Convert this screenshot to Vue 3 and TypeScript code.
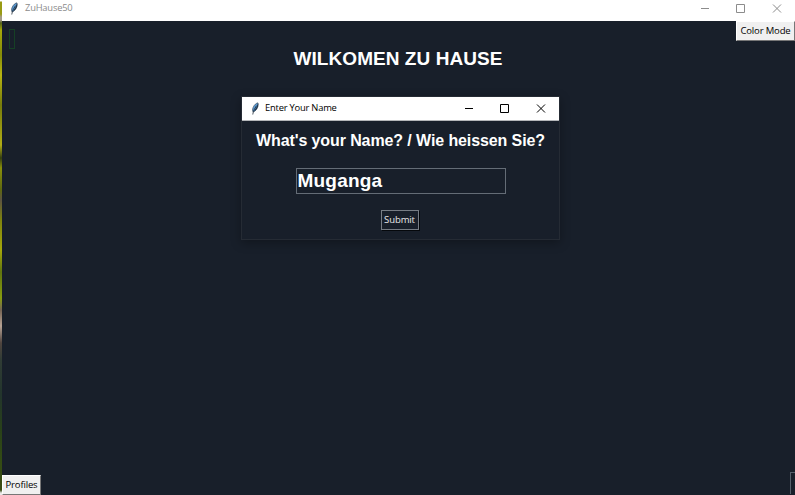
<script setup lang="ts">
import { ref } from 'vue'

const appTitle = 'ZuHause50'
const dialogTitle = 'Enter Your Name'
const name = ref('Muganga')
const windows = ['minimise', 'maximise', 'close'] as const
</script>

<template>
  <div class="desktop">
    <div class="wallpaper"></div>
    <main class="window">
      <header class="titlebar inactive">
        <svg class="feather" viewBox="0 0 10 14">
          <path d="M2.6 10.2C1.6 7 4.2 2 8 .9 9.4 4 7 8.8 3.6 10.6z" fill="#5a9bd5" stroke="#33414f" stroke-width=".7" />
          <path d="M8.4 1.4C9 4.8 6.6 9 3.6 10.4L6.6 5.6z" fill="#1c2a3a" />
          <path d="M2.6 13.5 3.4 9.5 6.6 4" stroke="#182431" stroke-width=".8" fill="none" />
        </svg>
        <span class="caption main-caption">{{ appTitle }}</span>
        <span class="controls">
          <svg v-for="w in windows" :key="w" viewBox="0 0 9 9" :class="w">
            <path v-if="w === 'minimise'" d="M1 4.5H9" />
            <path v-else-if="w === 'maximise'" d="M.5.5H8.5V8.5H.5Z" />
            <path v-else d="M1 .5 9 8.5M9 .5 1 8.5" />
          </svg>
        </span>
      </header>
      <section class="content">
        <div class="top-row">
          <div class="green-frame"></div>
          <button class="tk-button color-mode"><span>Color Mode</span></button>
        </div>
        <h1><span>WILKOMEN ZU HAUSE</span></h1>
        <div class="bottom-row">
          <button class="tk-button profiles"><span>Profiles</span></button>
          <div class="edge-frame"></div>
        </div>
      </section>
    </main>

    <section class="dialog">
      <header class="titlebar">
        <svg class="feather" viewBox="0 0 10 14">
          <path d="M2.6 10.2C1.6 7 4.2 2 8 .9 9.4 4 7 8.8 3.6 10.6z" fill="#5a9bd5" stroke="#33414f" stroke-width=".7" />
          <path d="M8.4 1.4C9 4.8 6.6 9 3.6 10.4L6.6 5.6z" fill="#1c2a3a" />
          <path d="M2.6 13.5 3.4 9.5 6.6 4" stroke="#182431" stroke-width=".8" fill="none" />
        </svg>
        <span class="caption dialog-caption">{{ dialogTitle }}</span>
        <span class="controls">
          <svg v-for="w in windows" :key="w" viewBox="0 0 9 9" :class="w">
            <path v-if="w === 'minimise'" d="M1 4.5H9" />
            <path v-else-if="w === 'maximise'" d="M.5.5H8.5V8.5H.5Z" />
            <path v-else d="M1 .5 9 8.5M9 .5 1 8.5" />
          </svg>
        </span>
      </header>
      <form class="form" @submit.prevent>
        <label for="name">What's your Name? / Wie heissen Sie?</label>
        <input id="name" v-model="name" type="text" spellcheck="false" autocomplete="off" />
        <button class="submit"><span>Submit</span></button>
      </form>
    </section>
  </div>
</template>

<style>
body {
  margin: 0;
  overflow: hidden;
}
</style>

<style scoped>
* {
  box-sizing: border-box;
}
.desktop {
  position: relative;
  display: flex;
  width: 795px;
  height: 495px;
  background: #181f2a;
  font-family: 'Open Sans', 'Noto Sans', sans-serif;
}
.wallpaper {
  width: 2px;
  background: linear-gradient(#fff 0 1px, #999b13 2px 14px, #a59b87 17px 20px, #526018 23px, #a7a909 30px, #858c08 55px, #b8b512 75px, #777c0b 105px, #b0ac16 145px, #343e10 158px, #898f0b 168px, #5e6710 190px, #5d5440 200px, #7e830e 220px, #a5a70b 250px, #61750f 272px, #879c0f 298px, #766554 310px, #b6a294 326px, #4f443e 343px, #303c35 360px, #23352c 395px, #294119 430px, #334b14 460px, #3b4c13 490px, #e8e8e8 493px);
}
.window {
  flex: 1;
  display: flex;
  flex-direction: column;
  min-width: 0;
}
.titlebar {
  display: flex;
  align-items: center;
  height: 24px;
  flex: none;
  padding: 0 14px 1px 8px;
  border-bottom: 1px solid #b4b6b9;
  background: #fff;
  color: #000;
}
.titlebar.inactive {
  height: 21px;
  padding: 0 14px 5px 7px;
  border-bottom: 0;
  color: #8c8c8c;
}
.feather {
  width: 10px;
  height: 13px;
}
.caption {
  font-size: 9.4px;
  line-height: 14px;
  letter-spacing: -0.22px;
  white-space: nowrap;
}
.main-caption {
  margin-left: 6px;
}
.dialog-caption {
  margin-left: 5px;
}
.controls {
  display: flex;
  gap: 27px;
  margin-left: auto;
}
.controls svg {
  width: 9px;
  height: 9px;
  overflow: visible;
  fill: none;
  stroke: currentColor;
  stroke-width: 1;
}
.content {
  flex: 1;
  display: flex;
  flex-direction: column;
  background: #181f2a;
}
.top-row {
  display: flex;
  justify-content: space-between;
  height: 28px;
}
.green-frame {
  width: 6px;
  height: 20px;
  margin: 8px 0 0 7px;
  border: 1px solid #164025;
}
.tk-button {
  height: 20px;
  padding: 0;
  border: 1px solid;
  border-color: #fff #777 #777 #fff;
  background: #f0f0f0;
  color: #000;
  font: 9.5px/18px 'Open Sans', sans-serif;
  letter-spacing: -0.15px;
  white-space: nowrap;
}
.color-mode {
  width: 59px;
}
.profiles {
  width: 39px;
}
h1 {
  margin: 0;
  padding-right: 1px;
  color: #fff;
  font: bold 19px/20px 'Liberation Sans', sans-serif;
  letter-spacing: 0.06px;
  text-align: center;
}
.bottom-row {
  display: flex;
  justify-content: space-between;
  align-items: flex-end;
  margin-top: auto;
}
.edge-frame {
  width: 5px;
  height: 22px;
  margin-bottom: 1px;
  border: 1px solid #56606b;
  border-right: 0;
  border-bottom: 0;
}
.dialog {
  position: absolute;
  left: 241px;
  top: 96px;
  width: 319px;
  height: 144px;
  border: 1px solid #252b34;
  background: #181f2a;
  box-shadow: 0 3px 10px rgba(0, 0, 0, .3);
}
.form {
  display: flex;
  flex-direction: column;
  align-items: center;
}
label {
  margin-top: 10px;
  color: #fff;
  font: bold 16px/19px 'Liberation Sans', sans-serif;
  letter-spacing: -0.1px;
  white-space: nowrap;
}
input {
  width: 210px;
  height: 26px;
  margin-top: 18px;
  padding: 0 1px;
  border: 1px solid #646c76;
  outline: 0;
  background: #181f2a;
  color: #fff;
  font: bold 19px/24px 'Liberation Sans', sans-serif;
  letter-spacing: 0.2px;
}
.submit {
  width: 38px;
  height: 20px;
  margin: 16px 2px 0 0;
  padding: 0;
  border: 1px solid #777d85;
  box-shadow: 1px 1px 0 #05080c;
  background: #181f2a;
  color: #e8e8e8;
  font: 9.5px/18px 'Open Sans', sans-serif;
  letter-spacing: -0.1px;
}
</style>
